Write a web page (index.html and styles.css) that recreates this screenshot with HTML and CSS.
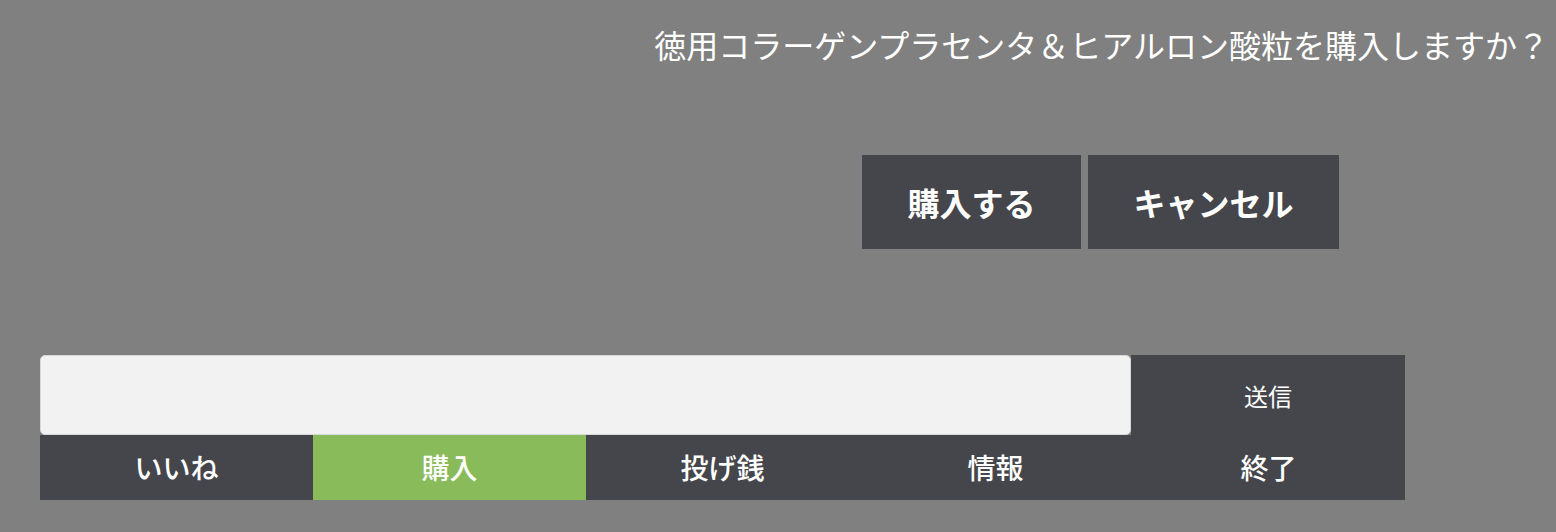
FILE: index.html
```html
<!DOCTYPE html>
<html lang="ja">
<head>
  <meta charset="UTF-8">
  <title>購入確認</title>
  <link rel="stylesheet" href="styles.css">
</head>
<body>
  <div class="pregunta">
    <p>徳用コラーゲンプラセンタ＆ヒアルロン酸粒を購入しますか？</p>
  </div>

  <div class="confirmar">
    <button class="btn-confirmar">購入する</button>
    <button class="btn-confirmar btn-cancelar">キャンセル</button>
  </div>

  <div class="panel">
    <div class="envio">
      <input type="text" class="mensaje">
      <button class="btn-enviar">送信</button>
    </div>
    <div class="menu">
      <button class="tab">いいね</button>
      <button class="tab activo">購入</button>
      <button class="tab">投げ銭</button>
      <button class="tab">情報</button>
      <button class="tab">終了</button>
    </div>
  </div>
</body>
</html>
```

FILE: styles.css
```css
body {
  font-family: "Noto Sans CJK JP", "Noto Sans", sans-serif;
  margin: 0;
  padding: 0;
  background-color: #808080;
  height: 532px;
  overflow: hidden;
}
.pregunta {
  text-align: right;
  padding: 21px 7px 0 0;
  height: 131px;
  box-sizing: border-box;
}
.pregunta p {
  margin: 0;
  color: #fff;
  font-size: 32px;
  line-height: 46px;
}
.confirmar {
  display: flex;
  gap: 7px;
  padding-left: 862px;
  margin-top: 24px;
}
.btn-confirmar {
  width: 219px;
  height: 94px;
  background-color: #45464b;
  color: #fff;
  border: none;
  font-family: inherit;
  font-size: 32px;
  font-weight: bold;
  padding: 0;
}
.btn-cancelar {
  width: 251px;
}
.panel {
  width: 1365px;
  margin: 106px 0 0 40px;
}
.envio {
  display: flex;
  height: 80px;
}
.mensaje {
  flex: 0 0 1091px;
  box-sizing: border-box;
  background-color: #f2f2f2;
  border: 1px solid #d8d8d8;
  border-radius: 5px;
  margin: 0;
}
.btn-enviar {
  flex: 1;
  background-color: #45464b;
  color: #fff;
  border: none;
  font-family: inherit;
  font-size: 24px;
}
.menu {
  display: grid;
  grid-template-columns: repeat(5, 1fr);
  height: 65px;
}
.tab {
  background-color: #45464b;
  color: #fff;
  border: none;
  font-family: inherit;
  font-size: 28px;
  font-weight: 500;
  padding: 0 0 2px;
}
.tab.activo {
  background-color: #8abb5a;
}
```
